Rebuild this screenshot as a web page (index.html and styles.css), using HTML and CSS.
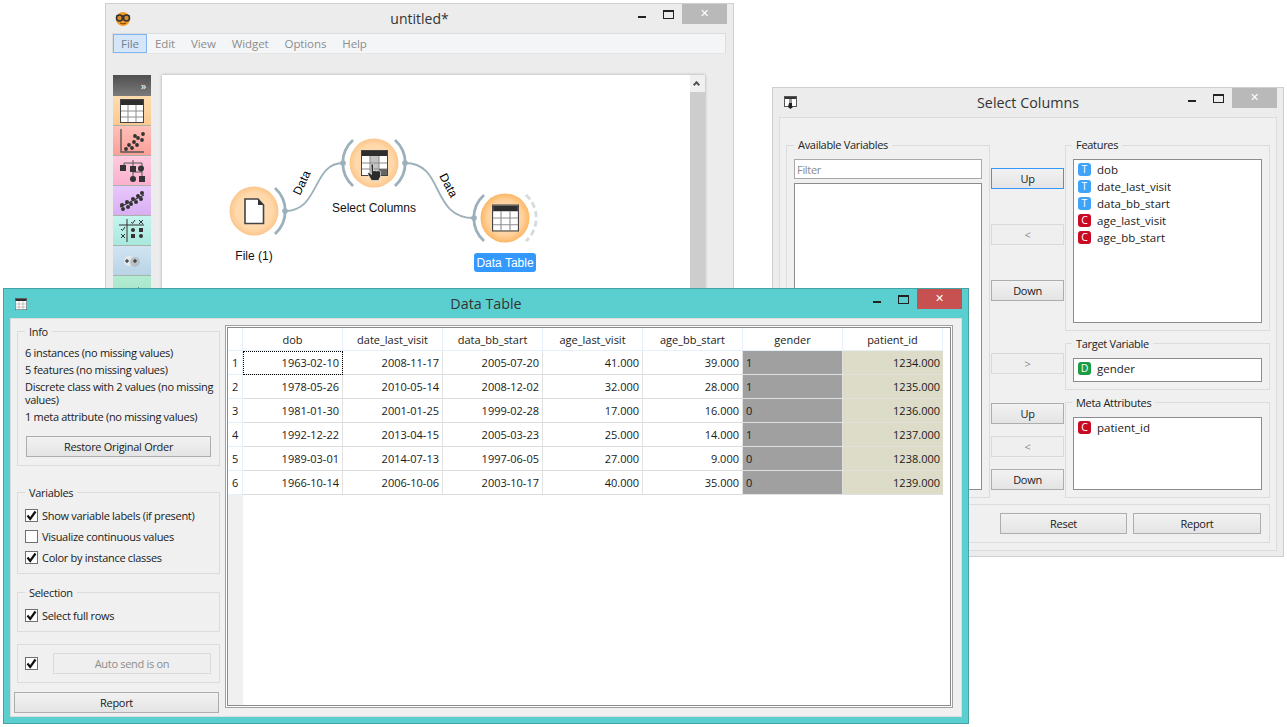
FILE: index.html
```html
<!DOCTYPE html>
<html>
  <head>
    <title>Orange Data Table</title>
    <link rel="stylesheet" href="styles.css">
  </head>
  <body>
    <svg class="defs" width="0" height="0">
      <symbol id="check" viewBox="0 0 13 13">
        <path d="M2.5 6.5 L5.2 10 L10.5 2.5" fill="none" stroke="#111" stroke-width="2.2"/>
      </symbol>
      <symbol id="tableicon" viewBox="0 0 24 24">
        <rect x="0.5" y="0.5" width="23" height="23" fill="#fff" stroke="#444"/>
        <rect x="1" y="1" width="22" height="5" fill="#2e2e2e"/>
        <path d="M8 6V23M16 6V23M1 12H23M1 18H23" stroke="#8f8f8f" fill="none"/>
      </symbol>
    </svg>

    <!-- main canvas window -->
    <div class="window canvas-window">
      <div class="titlebar">
        <svg class="logo" width="16" height="14" viewBox="0 0 16 14">
          <circle cx="8" cy="7" r="7" fill="#f29a26"/>
          <path d="M1 4H15" stroke="#333" stroke-width="1.2"/>
          <circle cx="4.5" cy="6" r="3" fill="#d98a2b" stroke="#333" stroke-width="1.6"/>
          <circle cx="11.5" cy="6" r="3" fill="#d98a2b" stroke="#333" stroke-width="1.6"/>
          <path d="M5 11 Q8 13 11 11" stroke="#7a4300" fill="none"/>
        </svg>
        <div class="title">untitled*</div>
        <div class="controls">
          <span class="ctl"><i class="min"></i></span>
          <span class="ctl"><i class="max"></i></span>
          <span class="close">&#x2715;</span>
        </div>
      </div>
      <div class="menubar">
        <span class="menu on">File</span>
        <span class="menu">Edit</span>
        <span class="menu">View</span>
        <span class="menu">Widget</span>
        <span class="menu">Options</span>
        <span class="menu">Help</span>
      </div>
      <div class="workspace">
        <div class="toolbox">
          <div class="toolhead">&raquo;</div>
          <div class="tile t1">
            <svg width="24" height="24"><use href="#tableicon"/></svg>
          </div>
          <div class="tile t2">
            <svg width="26" height="26" viewBox="0 0 26 26" fill="#333">
              <path d="M2 1V24H25" fill="none" stroke="#555" stroke-width="1.4"/>
              <circle cx="7" cy="21" r="1.9"/><circle cx="10" cy="17" r="1.9"/><circle cx="13" cy="20" r="1.9"/>
              <circle cx="15" cy="14" r="1.9"/><circle cx="18" cy="17" r="1.9"/><circle cx="19" cy="10" r="1.9"/>
              <circle cx="23" cy="12" r="1.9"/><circle cx="24" cy="6" r="1.9"/><circle cx="16" cy="8" r="1.9"/>
            </svg>
          </div>
          <div class="tile t3">
            <svg width="26" height="26" viewBox="0 0 26 26" fill="#333">
              <path d="M5 8V5H23V8M14 2V9M23 8V14H14V19M23 14V19" fill="none" stroke="#555"/>
              <rect x="1" y="7" width="6" height="6"/><rect x="11" y="8" width="6" height="6"/>
              <circle cx="22" cy="10.500" r="3"/><circle cx="14" cy="21" r="3"/><rect x="20" y="18" width="6" height="6"/>
            </svg>
          </div>
          <div class="tile t4">
            <svg width="26" height="22" viewBox="0 0 26 22" fill="#333">
              <path d="M1 17L25 5" stroke="#333" stroke-width="1.2"/>
              <circle cx="3" cy="15" r="2"/><circle cx="4" cy="19" r="2"/><circle cx="8" cy="12" r="2"/>
              <circle cx="9" cy="17" r="2"/><circle cx="12" cy="14" r="2"/><circle cx="14" cy="9" r="2"/>
              <circle cx="17" cy="12" r="2"/><circle cx="19" cy="6" r="2"/><circle cx="22" cy="9" r="2"/><circle cx="23" cy="3" r="2"/>
            </svg>
          </div>
          <div class="tile t5">
            <svg width="26" height="24" viewBox="0 0 26 24" fill="#333">
              <path d="M0 6H25M8 0V23" stroke="#333" fill="none"/>
              <path d="M12 3L13.500 4.500L16 1M2 10L3.500 11.500L6 8" stroke="#333" fill="none"/>
              <path d="M20 1L24 5M24 1L20 5M2 15L6 19M6 15L2 19" stroke="#333" fill="none"/>
              <circle cx="14" cy="11" r="2"/><rect x="20" y="9" width="4" height="4"/>
              <rect x="12" y="15" width="4" height="4"/><circle cx="22" cy="17" r="2"/>
            </svg>
          </div>
          <div class="tile t6">
            <svg width="22" height="16" viewBox="0 0 22 16">
              <circle cx="8" cy="8" r="5" fill="#e4e8ea"/><circle cx="14" cy="9" r="5" fill="#b8c0c6"/>
              <path d="M4 8H8M6 6V10M12 8H16M14 6V10" stroke="#222"/>
            </svg>
          </div>
          <div class="tile t7">
            <svg width="14" height="8" viewBox="0 0 14 8" fill="#333">
              <path d="M0 8L5 4L9 5L14 0V8Z"/>
            </svg>
          </div>
        </div>
        <div class="canvas">
          <svg class="scheme" viewBox="162 75 543 225" width="543" height="225">
            <defs>
              <radialGradient id="node">
                <stop offset="0" stop-color="#ffe0bb"/>
                <stop offset="0.75" stop-color="#ffd8aa"/>
                <stop offset="1" stop-color="#fdc68c"/>
              </radialGradient>
              <radialGradient id="nodeon">
                <stop offset="0" stop-color="#ffddb4"/>
                <stop offset="0.7" stop-color="#ffd39e"/>
                <stop offset="1" stop-color="#fdb766"/>
              </radialGradient>
            </defs>
            <g fill="none" stroke="#9bb0ba" stroke-width="1.800">
              <path d="M285 211C320 211 312 163 343 163"/>
              <path d="M405 163C445 163 430 218 474 218"/>
            </g>
            <g fill="none" stroke="#9bb0ba" stroke-width="2.800">
              <path d="M275 188A31 31 0 0 1 275 234"/>
              <path d="M353 140A31 31 0 0 0 353 186"/>
              <path d="M395 140A31 31 0 0 1 395 186"/>
              <path d="M484 195A31 31 0 0 0 484 241"/>
              <path d="M526 195A31 31 0 0 1 526 241" stroke="#d3dbdf" stroke-dasharray="6 3.500"/>
            </g>
            <g fill="#9bb0ba">
              <circle cx="285" cy="211" r="2.800"/>
              <circle cx="343" cy="163" r="2.800"/>
              <circle cx="405" cy="163" r="2.800"/>
              <circle cx="474" cy="218" r="2.800"/>
            </g>
            <circle cx="254" cy="211" r="24.500" fill="url(#node)"/>
            <circle cx="374" cy="163" r="24.500" fill="url(#node)"/>
            <circle cx="505" cy="218" r="24.500" fill="url(#nodeon)"/>

            <path d="M245 199H258L263.500 205V223.500H245Z" fill="#fff" stroke="#444" stroke-width="1.600"/>
            <path d="M258 199V205H263.500Z" fill="#333"/>

            <rect x="361.500" y="150.500" width="26" height="25" fill="#fff" stroke="#444"/>
            <rect x="362" y="151" width="25" height="5" fill="#2e2e2e"/>
            <rect x="370" y="156" width="9" height="19" fill="#c4c4c4"/>
            <path d="M370 156V175M379 156V175M362 163H387M362 169H387" stroke="#888"/>
            <rect x="379" y="169" width="8" height="6" fill="#666"/>
            <path d="M371 164h2.500v7l1.500-.5 1.500.5 1.500-.5 2.500 1v5l-2 4h-7l-4-7 1.500-1 2.500 2Z" fill="#2b2b2b" stroke="#fff" stroke-width="0.600"/>

            <svg x="492" y="204" width="27" height="28"><use href="#tableicon" width="27" height="28"/></svg>

            <text class="link" transform="translate(300 196) rotate(-65)">Data</text>
            <text class="link" transform="translate(439 176) rotate(62)">Data</text>
            <text class="nodetext" x="254" y="260">File (1)</text>
            <text class="nodetext" x="374" y="212">Select Columns</text>
            <rect x="474" y="253" width="62" height="19" rx="3" fill="#3399ff"/>
            <text class="nodetext sel" x="505" y="267">Data Table</text>
          </svg>
          <div class="vscroll"><div class="arrow"></div><div class="thumb"></div></div>
        </div>
      </div>
    </div>

    <!-- select columns -->
    <div class="window select-window">
      <div class="titlebar">
        <svg class="wicon" width="13" height="13" viewBox="0 0 13 13">
          <rect x="0.500" y="0.500" width="12" height="10" fill="#fff" stroke="#555"/>
          <rect x="1" y="1" width="11" height="2" fill="#333"/>
          <rect x="5" y="3" width="3" height="8" fill="#999"/>
          <path d="M5 7h3v3l1 1-2.500 2L4 11Z" fill="#222"/>
        </svg>
        <div class="title small">Select Columns</div>
        <div class="controls">
          <span class="ctl"><i class="min"></i></span>
          <span class="ctl"><i class="max"></i></span>
          <span class="close">&#x2715;</span>
        </div>
      </div>
      <div class="panel sc-panel">
        <div class="sc-grid">
          <fieldset class="group">
            <legend>Available Variables</legend>
            <div class="filter">Filter</div>
            <div class="list avail"></div>
          </fieldset>
          <div class="movers">
            <div class="mover-set wide">
              <button class="btn focus">Up</button>
              <button class="btn off">&lt;</button>
              <button class="btn">Down</button>
            </div>
            <button class="btn off single">&gt;</button>
            <div class="mover-set">
              <button class="btn">Up</button>
              <button class="btn off">&lt;</button>
              <button class="btn">Down</button>
            </div>
          </div>
          <div class="stack">
            <fieldset class="group">
              <legend>Features</legend>
              <div class="list vars features">
                <div class="var"><b class="badge t">T</b>dob</div>
                <div class="var"><b class="badge t">T</b>date_last_visit</div>
                <div class="var"><b class="badge t">T</b>data_bb_start</div>
                <div class="var"><b class="badge c">C</b>age_last_visit</div>
                <div class="var"><b class="badge c">C</b>age_bb_start</div>
              </div>
            </fieldset>
            <fieldset class="group roomy">
              <legend>Target Variable</legend>
              <div class="list vars target">
                <div class="var"><b class="badge d">D</b>gender</div>
              </div>
            </fieldset>
            <fieldset class="group roomy">
              <legend>Meta Attributes</legend>
              <div class="list vars meta">
                <div class="var"><b class="badge c">C</b>patient_id</div>
              </div>
            </fieldset>
          </div>
        </div>
        <div class="sc-bottom">
          <button class="btn reset">Reset</button>
          <button class="btn report">Report</button>
        </div>
      </div>
    </div>

    <!-- data table -->
    <div class="window table-window">
      <div class="titlebar">
        <svg class="wicon" width="12" height="12"><use href="#tableicon" width="12" height="12"/></svg>
        <div class="title small">Data Table</div>
        <div class="controls">
          <span class="ctl"><i class="min"></i></span>
          <span class="ctl"><i class="max"></i></span>
          <span class="close red">&#x2715;</span>
        </div>
      </div>
      <div class="panel dt-panel">
        <div class="sidebar">
          <fieldset class="group info">
            <legend>Info</legend>
            <p>6 instances (no missing values)</p>
            <p>5 features (no missing values)</p>
            <p>Discrete class with 2 values (no missing values)</p>
            <p>1 meta attribute (no missing values)</p>
            <button class="btn restore">Restore Original Order</button>
          </fieldset>
          <fieldset class="group opts vars-box">
            <legend>Variables</legend>
            <label class="opt"><span class="cb"><svg width="13" height="13"><use href="#check"/></svg></span>Show variable labels (if present)</label>
            <label class="opt"><span class="cb"></span>Visualize continuous values</label>
            <label class="opt"><span class="cb"><svg width="13" height="13"><use href="#check"/></svg></span>Color by instance classes</label>
          </fieldset>
          <fieldset class="group opts sel-box">
            <legend>Selection</legend>
            <label class="opt"><span class="cb"><svg width="13" height="13"><use href="#check"/></svg></span>Select full rows</label>
          </fieldset>
          <div class="autosend">
            <span class="cb"><svg width="13" height="13"><use href="#check"/></svg></span>
            <button class="btn off auto">Auto send is on</button>
          </div>
          <button class="btn side-report">Report</button>
        </div>
        <div class="table-frame">
          <div class="table-view">
            <table class="data">
              <thead>
                <tr><th class="corner"></th><th>dob</th><th>date_last_visit</th><th>data_bb_start</th><th>age_last_visit</th><th>age_bb_start</th><th>gender</th><th>patient_id</th></tr>
              </thead>
              <tbody>
                <tr><th>1</th><td class="current">1963-02-10</td><td>2008-11-17</td><td>2005-07-20</td><td>41.000</td><td>39.000</td><td class="cls">1</td><td class="mta">1234.000</td></tr>
                <tr><th>2</th><td>1978-05-26</td><td>2010-05-14</td><td>2008-12-02</td><td>32.000</td><td>28.000</td><td class="cls">1</td><td class="mta">1235.000</td></tr>
                <tr><th>3</th><td>1981-01-30</td><td>2001-01-25</td><td>1999-02-28</td><td>17.000</td><td>16.000</td><td class="cls">0</td><td class="mta">1236.000</td></tr>
                <tr><th>4</th><td>1992-12-22</td><td>2013-04-15</td><td>2005-03-23</td><td>25.000</td><td>14.000</td><td class="cls">1</td><td class="mta">1237.000</td></tr>
                <tr><th>5</th><td>1989-03-01</td><td>2014-07-13</td><td>1997-06-05</td><td>27.000</td><td>9.000</td><td class="cls">0</td><td class="mta">1238.000</td></tr>
                <tr><th>6</th><td>1966-10-14</td><td>2006-10-06</td><td>2003-10-17</td><td>40.000</td><td>35.000</td><td class="cls">0</td><td class="mta">1239.000</td></tr>
              </tbody>
            </table>
          </div>
        </div>
      </div>
    </div>
  </body>
</html>
```

FILE: styles.css
```css
body {
  margin: 0;
  background-color: #fff;
  font-family: "Open Sans", "Noto Sans", sans-serif;
  font-size: 11px;
  letter-spacing: -0.3px;
  color: #1a1a1a;
  width: 1287px;
  height: 727px;
  overflow: hidden;
  position: relative;
}

.defs {
  position: absolute;
}

/* windows */
.window {
  position: absolute;
  box-sizing: border-box;
  border: 1px solid #cfcfcf;
  background-color: #ececec;
}

.canvas-window {
  left: 105px;
  top: 3px;
  width: 629px;
  height: 320px;
}

.select-window {
  left: 772px;
  top: 87px;
  width: 512px;
  height: 470px;
}

.table-window {
  left: 3px;
  top: 288px;
  width: 966px;
  height: 436px;
  background-color: #5bcfcf;
  border-color: #46a3a3;
}

.titlebar {
  height: 29px;
  display: grid;
  grid-template-columns: 1fr auto 1fr;
  align-items: center;
}

.logo {
  margin-left: 9px;
}

.wicon {
  margin-left: 11px;
}

.title {
  font-size: 14px;
  letter-spacing: 0;
  color: #333;
}

.title.small {
  font-size: 14.300px;
}

.controls {
  justify-self: end;
  align-self: start;
  display: flex;
  margin-right: 6px;
}

.ctl {
  width: 27px;
  height: 20px;
  position: relative;
  display: flex;
  justify-content: center;
}

.min {
  width: 8px;
  height: 2px;
  margin-top: 12px;
  background-color: #222;
}

.max {
  width: 9px;
  height: 6px;
  margin-top: 6px;
  border: 1px solid #222;
  border-top-width: 2px;
}

.close {
  width: 45px;
  height: 20px;
  background-color: #b9b9b9;
  color: #fff;
  font-family: "DejaVu Sans", sans-serif;
  font-size: 11px;
  font-weight: bold;
  line-height: 20px;
  text-align: center;
}

.close.red {
  background-color: #c75050;
}

/* main window */
.menubar {
  margin: 0 7px 0 6px;
  height: 21px;
  display: flex;
  align-items: stretch;
  background-color: #f4f5f7;
  border-top: 1px solid #dcdcdc;
  border-left: 1px solid #dcdcdc;
  border-right: 1px solid #dcdcdc;
  border-bottom: 1px solid #e6e6e6;
  box-sizing: border-box;
}

.menu {
  padding: 0 8px;
  line-height: 19px;
  font-size: 11.500px;
  letter-spacing: -0.1px;
  color: #8d8d8d;
}

.menu.on {
  box-sizing: border-box;
  width: 34px;
  padding: 0;
  text-align: center;
  line-height: 17px;
  background-color: #d5e6f8;
  border: 1px solid #80b5ef;
  color: #6f7f8f;
}

.workspace {
  display: flex;
  gap: 11px;
  padding: 21px 0 0 7px;
}

.toolbox {
  width: 38px;
}

.toolhead {
  height: 21px;
  background: linear-gradient(#4f4f4f, #7b7b7b);
  color: #fff;
  font-size: 11px;
  line-height: 21px;
  text-align: right;
  padding-right: 5px;
  box-sizing: border-box;
}

.tile {
  height: 30px;
  box-sizing: border-box;
  border-bottom: 1px solid #a9b3a9;
  display: flex;
  align-items: center;
  justify-content: center;
}

.t1 { background: linear-gradient(#ffdcb0, #fac98f); }
.t2 { background: linear-gradient(#ffc0b8, #fb9f98); }
.t3 { background: linear-gradient(#ffcadf, #fbb0ce); }
.t4 { background: linear-gradient(#e8c8fb, #d9aef2); }
.t5 { background: linear-gradient(#c4f5ef, #a9e8dd); }
.t6 { background: linear-gradient(#d0e4f2, #b9d4e6); }
.t7 { background: linear-gradient(#b2ecd2, #a2e0c4); }

.canvas {
  position: relative;
  width: 543px;
  height: 225px;
  background-color: #fff;
  box-shadow: 0 0 3px rgba(0, 0, 0, 0.3);
}

.scheme {
  display: block;
}

.link {
  font-family: "Liberation Sans", sans-serif;
  font-size: 12px;
  letter-spacing: 0;
  fill: #000;
}

.nodetext {
  font-family: "Liberation Sans", sans-serif;
  font-size: 12px;
  letter-spacing: 0;
  fill: #111;
  text-anchor: middle;
}

.nodetext.sel {
  fill: #fff;
}

.vscroll {
  position: absolute;
  right: 0;
  top: 0;
  bottom: 0;
  width: 15px;
  background-color: #f0f0f0;
  overflow: hidden;
}

.arrow {
  height: 17px;
  background-color: #f0f0f0;
  position: relative;
}

.arrow::after {
  content: "";
  position: absolute;
  left: 4px;
  top: 7px;
  width: 5px;
  height: 5px;
  border-left: 2px solid #555;
  border-top: 2px solid #555;
  transform: rotate(45deg);
  box-sizing: border-box;
}

.thumb {
  height: 100%;
  background-color: #cdcdcd;
}

/* shared widgets */
.panel {
  box-sizing: border-box;
  margin: 0 6px;
  background-color: #f0f0f0;
  border: 1px solid #dcdcdc;
}

.group {
  margin: 0;
  padding: 6px 7px 7px;
  border: 1px solid #dcdcdc;
  box-sizing: border-box;
  min-width: 0;
}

.group legend {
  padding: 0 4px;
  line-height: 16px;
  color: #222;
}

.stack legend {
  margin-left: -1px;
}

.roomy legend,
.sidebar legend {
  position: relative;
  top: 1px;
}

.btn {
  display: block;
  box-sizing: border-box;
  height: 21px;
  padding: 0;
  border: 1px solid #adadad;
  background: linear-gradient(#f2f2f2, #e4e4e4);
  font: inherit;
  letter-spacing: inherit;
  color: #1a1a1a;
}

.btn.focus {
  border-color: #3399ff;
}

.btn.off {
  background: #efefef;
  border-color: #d9d9d9;
  color: #8c8c8c;
}

.list {
  box-sizing: border-box;
  background-color: #fff;
  border: 1px solid #8c8c90;
}

/* select columns */
.sc-panel {
  height: 434px;
  padding: 19px 6px 0;
}

.sc-grid {
  display: grid;
  grid-template-columns: 204px 75px 205px;
  height: 361px;
}

.filter {
  height: 20px;
  box-sizing: border-box;
  border: 1px solid #a9a9a9;
  background-color: #fff;
  color: #8a8a8a;
  line-height: 19px;
  padding-left: 2px;
}

.avail {
  height: 307px;
  margin-top: 4px;
}

.movers {
  padding: 31px 1px 0;
  display: flex;
  flex-direction: column;
}

.mover-set {
  display: flex;
  flex-direction: column;
  gap: 12px;
}

.mover-set.wide {
  gap: 35px;
}

.single {
  margin: 52px 0 29px;
}

.movers .btn {
  width: 73px;
}

.stack {
  display: flex;
  flex-direction: column;
  gap: 4px;
}

.group.roomy {
  padding-top: 7px;
}

.stack .group:nth-child(1) {
  height: 194px;
}

.stack .group:nth-child(2) {
  height: 55px;
}

.stack .group:nth-child(3) {
  height: 104px;
}

.vars {
  padding: 1px 0 0 4px;
}

.features {
  height: 164px;
}

.target {
  height: 24px;
}

.meta {
  height: 73px;
}

.var {
  height: 17px;
  display: flex;
  align-items: center;
  gap: 6px;
  font-size: 11.500px;
  letter-spacing: 0;
}

.badge {
  width: 13px;
  height: 13px;
  border-radius: 3px;
  color: #fff;
  font-weight: normal;
  font-size: 10.500px;
  line-height: 13px;
  text-align: center;
}

.badge.t { background-color: #3ea3f9; }
.badge.c { background-color: #c80a24; }
.badge.d { background-color: #1a9b46; }

.sc-bottom {
  margin-top: 6px;
  width: 484px;
  height: 39px;
  box-sizing: border-box;
  border: 1px solid #dcdcdc;
  display: flex;
  justify-content: flex-end;
  align-items: center;
  gap: 6px;
  padding-right: 8px;
}

.reset {
  width: 127px;
}

.report {
  width: 128px;
}

/* data table */
.dt-panel {
  height: 399px;
  display: flex;
  align-items: flex-start;
  gap: 5px;
  padding: 4px 0 0 3px;
}

.sidebar {
  width: 206px;
  display: flex;
  flex-direction: column;
  align-items: flex-end;
}

.sidebar .group {
  width: 203px;
}

.info {
  height: 143px;
  margin-bottom: 18px;
  padding: 7px 0 0 7px;
}

.info p {
  margin: 0 0 4px;
  line-height: 13px;
}

.restore {
  width: 185px;
  margin: 13px 0 0 1px;
}

.opts {
  padding: 5px 7px 4px;
}

.vars-box {
  height: 90px;
  margin-bottom: 10px;
}

.sel-box {
  height: 48px;
  margin-bottom: 12px;
}

.opt {
  height: 21px;
  display: flex;
  align-items: center;
  gap: 4px;
}

.cb {
  width: 13px;
  height: 13px;
  box-sizing: border-box;
  border: 1px solid #707070;
  background-color: #fff;
  position: relative;
  flex: none;
}

.cb svg {
  position: absolute;
  left: -1px;
  top: -1px;
}

.autosend {
  width: 203px;
  height: 39px;
  box-sizing: border-box;
  border: 1px solid #dcdcdc;
  display: flex;
  align-items: center;
  gap: 15px;
  padding-left: 7px;
  margin-bottom: 9px;
}

.auto {
  width: 158px;
}

.side-report {
  width: 205px;
  align-self: flex-start;
}

.table-frame {
  margin-top: 2px;
  width: 728px;
  height: 383px;
  box-sizing: border-box;
  border: 1px solid #a0a0a0;
  padding: 1px;
  background-color: #fff;
}

.table-view {
  height: 100%;
  box-sizing: border-box;
  border: 1px solid #8a8a8a;
  background: linear-gradient(to right, #f0f0f0 15px, #fff 15px);
}

.data {
  border-collapse: separate;
  border-spacing: 0;
  table-layout: fixed;
  width: 715px;
  letter-spacing: 0;
}

.data th,
.data td {
  box-sizing: border-box;
  padding: 0 3px;
  height: 24px;
  font-weight: normal;
  overflow: hidden;
  white-space: nowrap;
}

.data thead th {
  width: 100px;
  height: 23px;
  text-align: center;
  background-color: #fff;
  border-right: 1px solid #e6f0fb;
  border-bottom: 1px solid #e6f0fb;
}

.data thead .corner {
  width: 15px;
}

.data tbody th {
  text-align: left;
  padding-left: 4px;
  background-color: #fff;
  border-right: 1px solid #e6f0fb;
  border-bottom: 1px solid #e6f0fb;
}

.data td {
  text-align: right;
  border-right: 1px solid #e2e2e2;
  border-bottom: 1px solid #dcdcdc;
}

.data td.current {
  outline: 1px dotted #000;
  outline-offset: -1px;
}

.data td.cls {
  text-align: left;
  background-color: #a0a0a0;
  border-color: #e0e0e0;
}

.data td.mta {
  background-color: #dcdcc8;
  border-right: none;
  border-color: #e0e0e0;
}
```
